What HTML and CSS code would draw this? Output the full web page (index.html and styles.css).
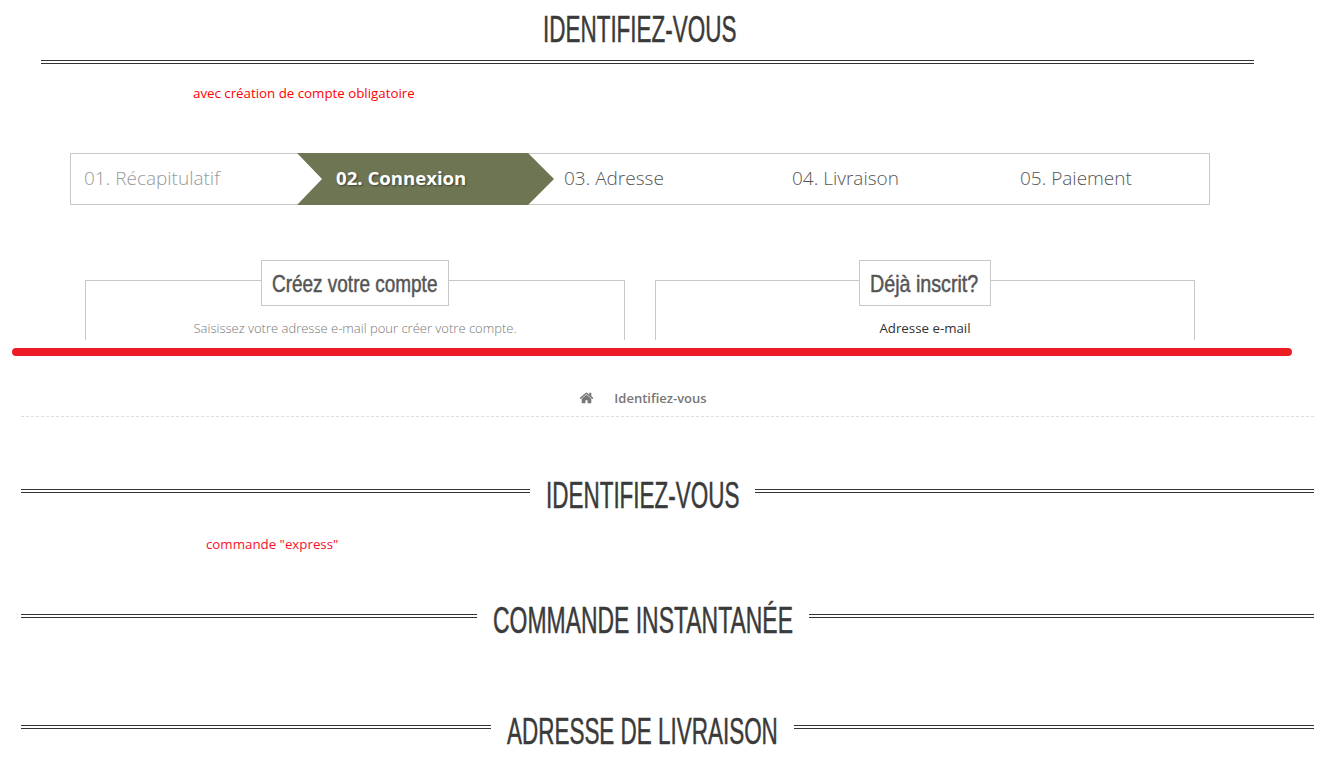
FILE: index.html
```html
<!DOCTYPE html>
<html lang="fr">
<head>
<meta charset="utf-8">
<title>Identifiez-vous</title>
<link rel="stylesheet" href="styles.css">
</head>
<body>
<header class="top">
  <h1 class="cond-title w-identify"><span>IDENTIFIEZ-VOUS</span></h1>
  <div class="rule top-rule"></div>
</header>
<p class="note note-first">avec création de compte obligatoire</p>
<ol class="steps">
  <li class="step step-first">01. Récapitulatif</li>
  <li class="step step-active">02. Connexion</li>
  <li class="step">03. Adresse</li>
  <li class="step">04. Livraison</li>
  <li class="step">05. Paiement</li>
</ol>
<div class="boxes">
  <section class="box">
    <h2 class="box-title w-create"><span>Créez votre compte</span></h2>
    <p class="box-text">Saisissez votre adresse e-mail pour créer votre compte.</p>
  </section>
  <section class="box">
    <h2 class="box-title w-login"><span>Déjà inscrit?</span></h2>
    <p class="box-label">Adresse e-mail</p>
  </section>
</div>
<div class="red-line"></div>
<nav class="crumb">
  <svg class="home" viewBox="0 0 1792 1792" aria-hidden="true"><path d="M1472 992v480q0 26-19 45t-45 19h-384v-384h-256v384h-384q-26 0-45-19t-19-45v-480q0-1 .5-3t.5-3l575-474 575 474q1 2 1 6zm223-69l-62 74q-8 9-21 11h-3q-13 0-21-7l-692-577-692 577q-12 8-24 7-13-2-21-11l-62-74q-8-10-7-23.5t11-21.5l719-599q32-26 76-26t76 26l244 204v-195q0-14 9-23t23-9h192q14 0 23 9t9 23v408l219 182q10 8 11 21.5t-7 23.5z"/></svg>
  <span class="crumb-text">Identifiez-vous</span>
</nav>
<div class="heading h-identify">
  <div class="rule"></div>
  <h2 class="cond-title w-identify"><span>IDENTIFIEZ-VOUS</span></h2>
  <div class="rule"></div>
</div>
<p class="note note-second">commande "express"</p>
<div class="heading h-command">
  <div class="rule"></div>
  <h2 class="cond-title w-command"><span>COMMANDE INSTANTANÉE</span></h2>
  <div class="rule"></div>
</div>
<div class="heading h-address">
  <div class="rule"></div>
  <h2 class="cond-title w-address"><span>ADRESSE DE LIVRAISON</span></h2>
  <div class="rule"></div>
</div>
</body>
</html>
```
FILE: styles.css
```css
* { box-sizing: border-box; }
html, body { margin: 0; padding: 0; }
body {
  width: 1327px;
  height: 776px;
  overflow: hidden;
  background: #fff;
  font-family: "Open Sans", "Liberation Sans", sans-serif;
  color: #333;
}
.rule {
  height: 4px;
  border-top: 1px solid #333;
  border-bottom: 1px solid #333;
}
.top { width: 1213px; margin-left: 41px; display: flex; flex-direction: column; align-items: center; padding-top: 9px; }
.top > .cond-title { margin-right: 16px; }
.top-rule { width: 100%; margin-top: 9px; }

.cond-title {
  margin: 0;
  height: 42px;
  flex: none;
  font-family: "Liberation Sans", sans-serif;
  font-size: 37px;
  line-height: 42px;
  font-weight: 400;
  color: #3a3a3a;
  white-space: nowrap;
}
.cond-title span, .box-title span {
  display: inline-block;
  transform-origin: 0 0;
  -webkit-text-stroke: .5px currentColor;
}
.w-identify { width: 193px; }
.w-identify span { transform: scaleX(.607); }
.w-command { width: 300px; }
.w-command span { transform: scaleX(.62); }
.w-address { width: 271px; }
.w-address span { transform: scaleX(.607); }

.note { margin: 0; font-size: 13.3px; line-height: 18px; color: #f00; }
.note-first { margin: 20px 0 0 193px; }
.note-second { margin: 18px 0 0 206px; color: #f5102c; }

.steps {
  list-style: none;
  margin: 51px 0 0 70px;
  padding: 0;
  width: 1140px;
  height: 52px;
  display: grid;
  grid-template-columns: 228px 228px 228px 228px 226px;
  border: 1px solid #c8c8c8;
  font-size: 19px;
  font-weight: 300;
  line-height: 48px;
  color: #555;
}
.step { padding-left: 37px; position: relative; white-space: nowrap; }
.step-first { padding-left: 13px; color: #999; }
.step-active {
  color: #fff;
  font-size: 18.6px;
  font-weight: 700;
  text-shadow: 1px 1px 2px rgba(0,0,0,.45);
  z-index: 1;
  isolation: isolate;
}
.step-active::before {
  content: "";
  position: absolute;
  left: -2px;
  top: -1px;
  width: 257px;
  height: 52px;
  background: #6e7553;
  clip-path: polygon(0 0, 231px 0, 257px 50%, 231px 100%, 0 100%, 25px 50%);
  z-index: -1;
}

.boxes { display: flex; gap: 30px; margin: 55px 0 0 85px; height: 80px; }
.box {
  width: 540px;
  height: 60px;
  margin-top: 20px;
  border: 1px solid #c8c8c8;
  border-bottom: 0;
  display: flex;
  flex-direction: column;
  align-items: center;
}
.box-title {
  margin: -21px 0 0;
  height: 46px;
  flex: none;
  background: #fff;
  border: 1px solid #c8c8c8;
  font-family: "Liberation Sans", sans-serif;
  font-size: 24px;
  font-weight: 400;
  line-height: 46px;
  color: #555;
  white-space: nowrap;
  padding-left: 10px;
  overflow: hidden;
}
.w-create { width: 188px; }
.w-create span { transform: scaleX(.79); }
.w-login { width: 132px; }
.w-login span { transform: scaleX(.82); }
.box-text { margin: 13px 0 0; font-size: 13px; font-weight: 300; line-height: 18px; color: #777; }
.box-label { margin: 13px 0 0; font-size: 13.3px; font-weight: 500; line-height: 18px; color: #333; }

.red-line {
  width: 1280px;
  height: 8px;
  margin: 8px 0 0 12px;
  background: #ed1c24;
  border-radius: 4px;
}
.crumb {
  margin: 33px 0 0 21px;
  width: 1293px;
  height: 28px;
  padding-right: 49px;
  border-bottom: 1px dashed #ddd;
  display: flex;
  justify-content: center;
  align-items: flex-start;
  gap: 20px;
  color: #777;
}
.home { width: 15px; height: 16px; fill: #777; margin-top: 1px; }
.crumb-text { font-size: 13px; font-weight: 600; line-height: 18px; }

.heading { margin-left: 21px; width: 1293px; display: flex; gap: 16px; }
.heading .rule { flex: 1 1 0; margin-top: 14px; }
.heading .rule:last-child { flex-basis: 50px; }
.h-identify { margin-top: 58px; }
.h-command { margin-top: 47px; }
.h-address { margin-top: 69px; }
```
